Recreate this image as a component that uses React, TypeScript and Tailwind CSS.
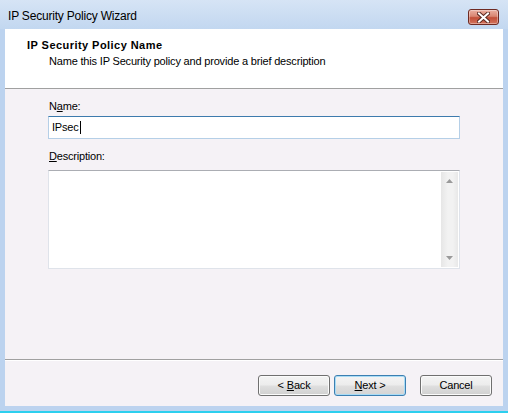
import React from 'react';

const FONT = "'Liberation Sans', Arial, sans-serif";

function CloseButton() {
  return (
    <div className="mr-[9px] mt-[9px] flex h-[16px] w-[31px] items-center justify-center self-start rounded-[3px] border border-[#6e2a22] bg-[linear-gradient(#ebb0a1,#d98672_45%,#c24f38_55%,#d2735d)] shadow-[inset_0_0_0_1px_rgba(255,255,255,0.35)]">
      <svg width="13" height="11" viewBox="0 0 13 11">
        <path d="M2 1.5 L11 9.5 M11 1.5 L2 9.5" stroke="#5b2a22" strokeWidth="4" strokeLinecap="square" />
        <path d="M2 1.5 L11 9.5 M11 1.5 L2 9.5" stroke="#ffffff" strokeWidth="2" strokeLinecap="square" />
      </svg>
    </div>
  );
}

function Button({ children, focused }: { children: React.ReactNode; focused?: boolean }) {
  return (
    <div
      className={
        'flex h-[21px] w-[72px] items-center justify-center rounded-[3px] border text-[11px] tracking-[-0.2px] text-black ' +
        (focused
          ? 'border-[#3c7fb1] bg-[linear-gradient(#f4f4f4,#ececec_48%,#dfdfdf_52%,#d4d4d4)] shadow-[inset_0_0_0_1px_#a9dcf6]'
          : 'border-[#707070] bg-[linear-gradient(#f4f4f4,#ececec_48%,#dfdfdf_52%,#d0d0d0)] shadow-[inset_0_0_0_1px_#fbfbfb]')
      }
    >
      {children}
    </div>
  );
}

function ScrollBar() {
  return (
    <div className="my-[1px] mr-[1px] flex w-[17px] flex-col items-center justify-between bg-[linear-gradient(90deg,#e6e6e6,#f2f2f2_40%,#f2f2f2_70%,#e8e8e8)] py-[7px]">
      <svg width="7" height="4" viewBox="0 0 7 4">
        <path d="M0 4 L3.5 0 L7 4 Z" fill="#9a9a9a" />
      </svg>
      <svg width="7" height="4" viewBox="0 0 7 4">
        <path d="M0 0 L3.5 4 L7 0 Z" fill="#9a9a9a" />
      </svg>
    </div>
  );
}

export default function App() {
  return (
    <div
      className="flex h-[413px] w-[508px] flex-col overflow-hidden bg-[#bcd3ef] text-black"
      style={{ fontFamily: FONT }}
    >
      {/* title bar */}
      <div className="flex h-[29px] shrink-0 justify-between bg-[linear-gradient(#d6e4f5,#c2d7f0)]">
        <div className="pl-[8px] pt-[9px] text-[12px] leading-[14px] tracking-[-0.2px] text-black">IP Security Policy Wizard</div>
        <CloseButton />
      </div>

      {/* client area */}
      <div className="mx-[5px] flex flex-1 flex-col bg-[#f5f2f6]">
        {/* header */}
        <div className="h-[60px] shrink-0 border-b border-[#a0a0a0] bg-white pl-[22px] pt-[10px] text-[11px] leading-[13px]">
          <div className="font-bold tracking-[0.45px]">IP Security Policy Name</div>
          <div className="mt-[3px] pl-[22px] tracking-[-0.18px]">Name this IP Security policy and provide a brief description</div>
        </div>

        {/* body */}
        <div className="flex flex-1 flex-col border-b border-[#a0a0a0] px-[43px] pt-[11px] text-[11px] leading-[13px] tracking-[-0.2px]">
          <div className="pl-[1px]">
            N<span className="underline">a</span>me:
          </div>
          <div className="mt-[3px] flex h-[23px] items-center border border-[#b5cfe7] border-t-[#3d7bad] bg-white pl-[3px]">
            IPsec<span className="ml-[1px] inline-block h-[13px] w-[1px] bg-black" />
          </div>
          <div className="mt-[11px] pl-[1px]">
            <span className="underline">D</span>escription:
          </div>
          <div className="mt-[7px] flex h-[99px] justify-end border border-[#dfe3ea] border-t-[#abadb3] bg-white">
            <ScrollBar />
          </div>
        </div>

        {/* buttons */}
        <div className="flex h-[46px] shrink-0 items-start justify-end border-t border-white pr-[11px] pt-[14px]">
          <Button>
            &lt; <span className="ml-[3px] underline">B</span>ack
          </Button>
          <div className="ml-[4px]">
            <Button focused>
              <span className="underline">N</span>ext &gt;
            </Button>
          </div>
          <div className="ml-[14px]">
            <Button>Cancel</Button>
          </div>
        </div>
      </div>

      {/* bottom frame */}
      <div className="h-[5px] shrink-0" />
      <div className="h-[2px] shrink-0 bg-[#2ccfee]" />
    </div>
  );
}
